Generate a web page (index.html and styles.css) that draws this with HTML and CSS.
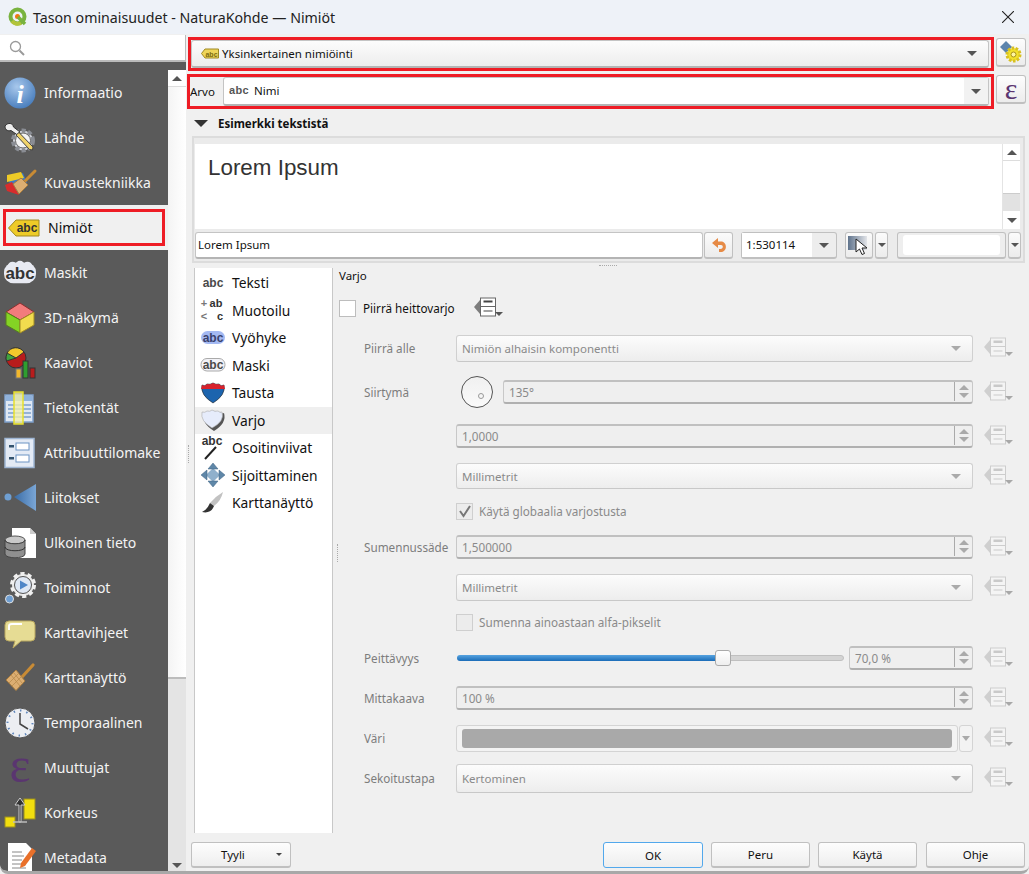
FILE: index.html
```html
<!DOCTYPE html>
<html lang="fi">
<head>
<meta charset="utf-8">
<title>Tason ominaisuudet</title>
<link rel="stylesheet" href="styles.css">
</head>
<body>
<svg class="defs" width="0" height="0">
  <defs>
    <symbol id="dd" viewBox="0 0 30 22">
      <path d="M0 10 6 3V17Z" fill="#cfcfcf"/>
      <rect x="6.5" y="1" width="15" height="8.500" fill="#f4f4f4" stroke="#cdcdcd"/>
      <rect x="6.500" y="9.500" width="15" height="9.500" fill="#f4f4f4" stroke="#cdcdcd"/>
      <rect x="9.500" y="3.500" width="9" height="2.500" fill="#c9c9c9"/>
      <rect x="9.500" y="13.500" width="9" height="1" fill="#c9c9c9"/>
      <path d="M21 15h8l-4 4Z" fill="#a8a8a8"/>
    </symbol>
    <symbol id="brush" viewBox="0 0 32 32">
      <path d="M18 15 29 3" stroke="#c88b35" stroke-width="3.200" stroke-linecap="round"/>
      <path d="M2 18 12 8 21 19 12 28.500Z" fill="#dcae72" stroke="#a87c3f"/>
      <path d="M7 13 16 24M9.500 10.500 18.500 21.500M5 21 15 11M8 24 18 14" stroke="#b88a4c" stroke-width=".8" fill="none"/>
    </symbol>
  </defs>
</svg>
<div class="window">
  <header class="titlebar">
    <svg class="qlogo" viewBox="0 0 20 20" width="20" height="20"><circle cx="9.500" cy="9.500" r="7" fill="none" stroke="#79b33f" stroke-width="4"/><path d="M4 14 A7 7 0 0 0 13 16" fill="none" stroke="#b3c43a" stroke-width="4"/><circle cx="9.500" cy="9.500" r="2.500" fill="#ee7913"/><path d="M10 10l7 7" stroke="#79b33f" stroke-width="3.500"/></svg>
    <span class="title">Tason ominaisuudet - NaturaKohde — Nimiöt</span>
    <svg class="close" viewBox="0 0 12 12" width="12" height="12"><path d="M0 0 12 12M12 0 0 12" stroke="#222" stroke-width="1.100"/></svg>
  </header>
  <div class="body">
    <aside class="leftcol">
      <div class="search"><svg viewBox="0 0 16 16" width="16" height="16"><circle cx="6.500" cy="6.500" r="5" fill="none" stroke="#9a9a9a" stroke-width="1.300"/><path d="M10.500 10.500 15 15" stroke="#9a9a9a" stroke-width="2"/></svg></div>
      <div class="navwrap">
        <nav class="nav">
          <div class="nav-item"><svg class="ni" viewBox="0 0 32 32"><defs><radialGradient id="ig" cx=".4" cy=".3" r=".8"><stop offset="0" stop-color="#a8c8ec"/><stop offset="1" stop-color="#3f76b8"/></radialGradient></defs><circle cx="16" cy="16" r="15.500" fill="url(#ig)"/><text x="16" y="26" class="itext">i</text></svg><span>Informaatio</span></div>
          <div class="nav-item"><svg class="ni" viewBox="0 0 32 32"><circle cx="19" cy="18.500" r="10" fill="#cfd2d8" stroke="#8a8d94" stroke-width="4" stroke-dasharray="4 2.500"/><circle cx="19" cy="18.500" r="7.500" fill="#f4f4f4" stroke="#666"/><path d="M1 4C4 0 9 1 9.500 5L16 10 13.500 13 7 8.500C4 9.500 1 8 1 4Z" fill="#eee" stroke="#333"/><path d="M12 13 15 10.500 29 25 28.500 28 25.500 27.500Z" fill="#f0d36a" stroke="#444"/></svg><span>Lähde</span></div>
          <div class="nav-item"><svg class="ni" viewBox="0 0 32 32"><path d="M3 12 19 6 23 16 14 27Z" fill="#3f78c4"/><path d="M1 18 8 15 15 28 3 24Z" fill="#d82c2c"/><path d="M3 8 17 5 20 11 3 15Z" fill="#eecb27"/><path d="M20 15 31 4" stroke="#c88b35" stroke-width="3" stroke-linecap="round"/><path d="M9 17 17 11 24 18 15 27Z" fill="#dcae72" stroke="#a87c3f"/></svg><span>Kuvaustekniikka</span></div>
          <div class="nav-item active"><div class="active-in"><svg class="tag" viewBox="0 0 32 18" width="32" height="18"><path d="M.5 9 8 1H31V17H8Z" fill="#eecb27" stroke="#a08a22"/><text x="19" y="13" class="abc">abc</text></svg><span>Nimiöt</span></div></div>
          <div class="nav-item"><svg class="ni" viewBox="0 0 34 26"><rect x="0" y="2" width="34" height="22" rx="10" fill="#e8eaf2"/><circle cx="9" cy="6" r="5" fill="#e8eaf2"/><circle cx="25" cy="6" r="5" fill="#e8eaf2"/><circle cx="17" cy="5" r="5" fill="#e8eaf2"/><text x="17" y="19" class="abc big">abc</text></svg><span>Maskit</span></div>
          <div class="nav-item"><svg class="ni" viewBox="0 0 32 32"><path d="M16 1 30 10 16 18 2 10Z" fill="#f27c7c" stroke="#8c2d2d"/><path d="M2 10 16 18V31L2 23Z" fill="#84d324" stroke="#567d1f"/><path d="M30 10 16 18V31L30 23Z" fill="#f2dc4e" stroke="#a18c24"/></svg><span>3D-näkymä</span></div>
          <div class="nav-item"><svg class="ni" viewBox="0 0 32 32"><circle cx="12" cy="11" r="10" fill="#b81c1c" stroke="#333"/><path d="M12 11V1A10 10 0 0 0 2.500 14Z" fill="#3fa33f" stroke="#333"/><path d="M12 11 3 6A10 10 0 0 1 20 5Z" fill="#f2c82c" stroke="#333"/><rect x="12" y="22" width="5" height="9" fill="#f2b72c" stroke="#777"/><rect x="19" y="14" width="5" height="17" fill="#2f9e2f" stroke="#333"/><rect x="26" y="21" width="5" height="10" fill="#b81c1c" stroke="#333"/></svg><span>Kaaviot</span></div>
          <div class="nav-item"><svg class="ni" viewBox="0 0 32 32"><rect x="1" y="3" width="28" height="27" fill="#dfe8f4" stroke="#7ea0cc" stroke-width="1.500"/><rect x="2" y="4" width="26" height="5" fill="#8fb2dc"/><path d="M4 13H27M4 17H27M4 21H27M4 25H27" stroke="#7ea0cc" stroke-width="1.500"/><rect x="10" y="0" width="9" height="32" fill="#f6f2a8" fill-opacity=".75" stroke="#e6df2c" stroke-width="1.500"/></svg><span>Tietokentät</span></div>
          <div class="nav-item"><svg class="ni" viewBox="0 0 32 32"><rect x="1" y="1.500" width="29" height="29" fill="#e3eaf5" stroke="#9fb6d4" stroke-width="1.500"/><rect x="12" y="6" width="13" height="7" fill="#fff" stroke="#6d93c4"/><rect x="12" y="18" width="13" height="7" fill="#fff" stroke="#6d93c4"/><rect x="5" y="8" width="5" height="2.500" fill="#33536f"/><rect x="5" y="20" width="5" height="2.500" fill="#33536f"/></svg><span>Attribuuttilomake</span></div>
          <div class="nav-item"><svg class="ni" viewBox="0 0 32 32"><defs><linearGradient id="lg" x1="0" x2="1"><stop offset="0" stop-color="#3a6ca6"/><stop offset="1" stop-color="#7aa6d6"/></linearGradient></defs><path d="M10 15 32 2V29Z" fill="url(#lg)"/><circle cx="4" cy="15" r="3.500" fill="#6f9fd2"/></svg><span>Liitokset</span></div>
          <div class="nav-item"><svg class="ni" viewBox="0 0 32 32"><path d="M8 1H26L32 7V31H8Z" fill="#fff"/><path d="M26 1V7H32Z" fill="#ccc"/><ellipse cx="11" cy="13" rx="10" ry="4" fill="#c9c9c9" stroke="#555"/><path d="M1 13V27C1 32 21 32 21 27V13C21 18 1 18 1 13Z" fill="#8f8f8f" stroke="#444"/><path d="M1 20C1 25 21 25 21 20" fill="none" stroke="#333"/></svg><span>Ulkoinen tieto</span></div>
          <div class="nav-item"><svg class="ni" viewBox="0 0 32 32"><circle cx="19" cy="13" r="11" fill="#e6e6e6" stroke="#f0f0f0" stroke-width="4" stroke-dasharray="4 3"/><circle cx="19" cy="13" r="8.500" fill="#dfe8f5" stroke="#555"/><path d="M16 8.500 24 13 16 17.500Z" fill="#4f86c8"/><circle cx="5.500" cy="27" r="4" fill="#6f9fd2" stroke="#e0e0e0"/></svg><span>Toiminnot</span></div>
          <div class="nav-item"><svg class="ni" viewBox="0 0 32 32"><path d="M5 4H27Q31 4 31 8V20Q31 24 27 24H17L9 31 11 24H5Q1 24 1 20V8Q1 4 5 4Z" fill="#e6dc94" stroke="#b8a760"/><path d="M5 13V9Q5 7 8 7H18" stroke="#fff" stroke-width="2" fill="none"/></svg><span>Karttavihjeet</span></div>
          <div class="nav-item"><svg class="ni"><use href="#brush" width="32" height="32"/></svg><span>Karttanäyttö</span></div>
          <div class="nav-item"><svg class="ni" viewBox="0 0 32 32"><circle cx="16" cy="16" r="15" fill="#eceef2" stroke="#555"/><circle cx="16" cy="16" r="12.500" fill="none" stroke="#5f86bb" stroke-width="2" stroke-dasharray="1.500 5"/><path d="M16 6V17L24 22" fill="none" stroke="#444" stroke-width="1.500"/></svg><span>Temporaalinen</span></div>
          <div class="nav-item"><span class="eps-icon">ε</span><span>Muuttujat</span></div>
          <div class="nav-item"><svg class="ni" viewBox="0 0 32 32"><rect x="20" y="2" width="11" height="20" fill="#f2de0e" stroke="#9c8f1e"/><rect x="1" y="20" width="10" height="10" fill="#f2de0e" stroke="#9c8f1e"/><path d="M15 25V8H11L16 1 21 8H17V25Z" fill="#333" stroke="#ccc"/><path d="M9 25H23" stroke="#bbb" stroke-width="1.500"/></svg><span>Korkeus</span></div>
          <div class="nav-item"><svg class="ni" viewBox="0 0 32 32"><path d="M4 1H22L28 7V31H4Z" fill="#fff"/><path d="M8 10H18M8 14H20M8 18H18M8 22H22M8 26H22" stroke="#888"/><path d="M17 21 28 6l4 3-11 15-5 2Z" fill="#e9702a"/></svg><span>Metadata</span></div>
        </nav>
        <div class="navscroll"><div class="arrow-btn"><i class="tri-up"></i></div><div class="nav-thumb"></div><div class="nav-rest"></div><div class="arrow-btn low"><i class="tri-down"></i></div></div>
      </div>
    </aside>
    <main class="main">
      <div class="row-one">
        <div class="redbox box-one">
          <div class="combo raised fill">
            <svg class="minitag" viewBox="0 0 18 11" width="18" height="11"><path d="M.5 5.500 4 1H17.500V10H4Z" fill="#eed55a" stroke="#a08a22"/><text x="10.500" y="8.500" class="abc small">abc</text></svg>
            <span class="grow">Yksinkertainen nimiöinti</span><i class="tri-down"></i>
          </div>
        </div>
        <button class="tool"><svg viewBox="0 0 24 24" width="24" height="24"><path d="M7 1 13 7 7 13 1 7Z" fill="#5c84ac"/><circle cx="14.500" cy="14.500" r="6.500" fill="#f2e02a" stroke="#d8c020" stroke-width="3" stroke-dasharray="2.500 1.500"/><circle cx="14.500" cy="14.500" r="2.500" fill="#fff6a0" stroke="#a8921c"/></svg></button>
      </div>
      <div class="row-two">
        <div class="redbox box-two">
          <label class="arvo">Arvo</label>
          <div class="combo white fill">
            <span class="abc-plain">abc</span>
            <span class="grow">Nimi</span><span class="cap"><i class="tri-down"></i></span>
          </div>
        </div>
        <button class="tool"><span class="eps-btn">ε</span></button>
      </div>
      <div class="preview-head"><i class="tri-big"></i><strong>Esimerkki tekstistä</strong></div>
      <section class="preview-frame">
        <div class="preview-top">
          <div class="preview-canvas">Lorem Ipsum</div>
          <div class="pv-scroll"><div class="pv-btn"><i class="tri-up"></i></div><div class="pv-gap"></div><div class="pv-thumb"></div><div class="pv-btn end"><i class="tri-down"></i></div></div>
        </div>
        <div class="preview-tools">
          <div class="text-input">Lorem Ipsum</div>
          <button class="mini undo"><svg viewBox="0 0 16 16" width="16" height="16"><path d="M7 1 1 6 7 11V8H10C12.500 8 12.500 12 9.500 12H8V15H10C16.500 15 16.500 4.500 10 4.500H7Z" fill="#e68a45"/></svg></button>
          <div class="scale"><span class="scale-val">1:530114</span><span class="scale-cap"><i class="tri-down"></i></span></div>
          <button class="mini pointer"><svg viewBox="0 0 24 20" width="24" height="20"><defs><linearGradient id="pg" x1="0" x2="1"><stop offset="0" stop-color="#5f738c"/><stop offset="1" stop-color="#e2e4e8"/></linearGradient></defs><rect x="1" y="1" width="19" height="14" fill="url(#pg)"/><path d="M9 4V17L12.500 14 15 19.500 17.500 18.500 15 13H20Z" fill="#fff" stroke="#222"/></svg></button>
          <button class="mini drop"><i class="tri-down"></i></button>
          <div class="colorbox"><div class="colorbox-in"></div></div>
          <button class="mini drop narrow"><i class="tri-down"></i></button>
        </div>
      </section>
      <div class="hsplit"><i></i></div>
      <div class="content">
        <ul class="tabs">
          <li><svg viewBox="0 0 24 16" width="24" height="16"><text x="12" y="12" class="abc grey">abc</text></svg><span>Teksti</span></li>
          <li><svg viewBox="0 0 26 26" width="26" height="26"><text x="4" y="10" class="op">+</text><text x="4" y="23" class="op">&lt;</text><text x="16" y="10" class="abc tiny">ab</text><text x="20" y="23" class="abc tiny">c</text></svg><span>Muotoilu</span></li>
          <li><svg viewBox="0 0 24 16" width="24" height="16"><rect x="0" y="1" width="24" height="13" rx="6.500" fill="#a4b9f2"/><text x="12" y="12" class="abc navy">abc</text></svg><span>Vyöhyke</span></li>
          <li><svg viewBox="0 0 26 16" width="26" height="16"><rect x="1" y="1.500" width="24" height="12.500" rx="6" fill="#f2f2f7" stroke="#aaa"/><text x="13" y="12" class="abc grey">abc</text></svg><span>Maski</span></li>
          <li><svg viewBox="0 0 24 22" width="24" height="22"><path d="M1 3Q4 5 6 2 9 3 12 1 15 3 18 2 20 5 23 3 25 13 12 21 -1 13 1 3Z" fill="#1c64ae" stroke="#222" stroke-width=".6"/><path d="M1 3Q4 5 6 2 9 3 12 1 15 3 18 2 20 5 23 3L24 7H0Z" fill="#d8222c"/></svg><span>Tausta</span></li>
          <li class="sel"><svg viewBox="0 0 24 22" width="24" height="22"><path d="M3 4Q6 5 8 3 11 4 13 2 16 4 19 3 21 5 23 4 26 14 13 22 0 14 3 4Z" fill="#555"/><path d="M1 3Q4 4 6 2 9 3 11 1 14 3 17 2 19 4 21 3 24 12 11 19 -1 12 1 3Z" fill="#e6ecfb" stroke="#aaa" stroke-width=".6"/></svg><span>Varjo</span></li>
          <li><svg viewBox="0 0 26 26" width="26" height="26"><text x="12" y="10" class="abc dark">abc</text><path d="M16 12 5 24" stroke="#222" stroke-width="2"/></svg><span>Osoitinviivat</span></li>
          <li><svg viewBox="0 0 26 26" width="26" height="26"><rect x="8" y="8" width="10" height="10" transform="rotate(45 13 13)" fill="#8fb0cc"/><path d="M13 1 18 7H8ZM13 25 8 19H18ZM1 13 7 8V18ZM25 13 19 18V8Z" fill="#5f87a8" stroke="#3e6383" stroke-width=".5"/></svg><span>Sijoittaminen</span></li>
          <li><svg viewBox="0 0 24 24" width="24" height="24"><path d="M22 1Q20 10 13 15L9 12Q15 5 22 1Z" fill="#c2c2c2"/><path d="M9 12 13 15Q10 23 1 21 6 19 9 12Z" fill="#333"/></svg><span>Karttanäyttö</span></li>
        </ul>
        <div class="vsplit"><i></i></div>
        <section class="panel">
          <div class="panel-title">Varjo</div>
          <div class="enable-row">
            <span class="check"></span><span class="enable-label">Piirrä heittovarjo</span>
            <svg class="dd-main" viewBox="0 0 30 22" width="30" height="22"><path d="M0 10 6 3V17Z" fill="#7d7d7d"/><rect x="6.500" y="1" width="15" height="8.500" fill="#fff" stroke="#666"/><rect x="6.500" y="9.500" width="15" height="9.500" fill="#fff" stroke="#666"/><rect x="9.500" y="3.500" width="9" height="2" fill="#444"/><rect x="9.500" y="13.500" width="9" height="1" fill="#444"/><path d="M21 15h8l-4 4Z" fill="#555"/></svg>
          </div>
          <div class="form">
            <label>Piirrä alle</label>
            <div class="combo raised dis h27"><span class="grow">Nimiön alhaisin komponentti</span><i class="tri-down"></i></div>
            <svg class="ddi"><use href="#dd"/></svg>

            <label>Siirtymä</label>
            <div class="dialrow"><span class="dial"><i></i></span><div class="spin"><span class="grow">135°</span><span class="arrows"><i class="tri-up"></i><i class="tri-down"></i></span></div></div>
            <svg class="ddi"><use href="#dd"/></svg>

            <span></span>
            <div class="spin"><span class="grow">1,0000</span><span class="arrows"><i class="tri-up"></i><i class="tri-down"></i></span></div>
            <svg class="ddi"><use href="#dd"/></svg>

            <span></span>
            <div class="combo raised dis h26"><span class="grow">Millimetrit</span><i class="tri-down"></i></div>
            <svg class="ddi"><use href="#dd"/></svg>

            <span></span>
            <div class="checkrow"><span class="check dis on"><svg viewBox="0 0 14 14" width="14" height="14"><path d="M2 7 5.500 12 12 2" fill="none" stroke="#777" stroke-width="2"/></svg></span><span>Käytä globaalia varjostusta</span></div>
            <span></span>

            <label>Sumennussäde</label>
            <div class="spin"><span class="grow">1,500000</span><span class="arrows"><i class="tri-up"></i><i class="tri-down"></i></span></div>
            <svg class="ddi"><use href="#dd"/></svg>

            <span></span>
            <div class="combo raised dis h27"><span class="grow">Millimetrit</span><i class="tri-down"></i></div>
            <svg class="ddi"><use href="#dd"/></svg>

            <span></span>
            <div class="checkrow"><span class="check dis"></span><span>Sumenna ainoastaan alfa-pikselit</span></div>
            <span></span>

            <label>Peittävyys</label>
            <div class="sliderrow"><div class="slider"><div class="slider-fill" style="width:67.8%"></div><div class="slider-handle"></div><div class="slider-rest"></div></div><div class="spin short"><span class="grow">70,0 %</span><span class="arrows"><i class="tri-up"></i><i class="tri-down"></i></span></div></div>
            <svg class="ddi"><use href="#dd"/></svg>

            <label>Mittakaava</label>
            <div class="spin"><span class="grow">100 %</span><span class="arrows"><i class="tri-up"></i><i class="tri-down"></i></span></div>
            <svg class="ddi"><use href="#dd"/></svg>

            <label>Väri</label>
            <div class="colorrow"><div class="colorbtn"><div class="swatch"></div></div><div class="colordrop"><i class="tri-down"></i></div></div>
            <svg class="ddi"><use href="#dd"/></svg>

            <label>Sekoitustapa</label>
            <div class="combo raised dis h29"><span class="grow">Kertominen</span><i class="tri-down"></i></div>
            <svg class="ddi"><use href="#dd"/></svg>
          </div>
        </section>
      </div>
      <footer class="footer">
        <button class="btn style">Tyyli<i class="tri-small"></i></button>
        <span class="grow"></span>
        <button class="btn ok">OK</button>
        <button class="btn">Peru</button>
        <button class="btn">Käytä</button>
        <button class="btn help">Ohje</button>
      </footer>
      <i class="leftgrip"></i>
    </main>
  </div>
</div>
</body>
</html>
```

FILE: styles.css
```css
* { box-sizing: border-box; }
html, body { margin: 0; padding: 0; }
body { width: 1029px; height: 874px; overflow: hidden; background: #f0f0f0; font: 12px "Noto Sans", "Open Sans", sans-serif; color: #111; }
.defs { position: absolute; }
.window { height: 874px; display: flex; flex-direction: column; border-bottom: 3px solid #a8a8a8; border-radius: 0 0 8px 8px; overflow: hidden; }
.titlebar { height: 34px; flex: none; background: #eef2f8; display: flex; align-items: center; padding: 0 15px 0 8px; }
.qlogo { margin-right: 5px; }
.title { flex: 1; font-size: 14.200px; color: #222; }
.body { flex: 1; display: flex; min-height: 0; }
.leftcol { width: 186px; flex: none; display: flex; flex-direction: column; }
.search { height: 27px; margin-top: 1px; background: #fff; border-bottom: 2px solid #bbb; border-right: 1px solid #bbb; padding: 5px 0 0 9px; }
.navwrap { flex: 1; display: flex; background: #5a5a5a; padding-top: 8px; min-height: 0; border-radius: 0 0 0 6px; }
.nav { width: 168px; flex: none; overflow: hidden; }
.nav-item { height: 45px; display: flex; align-items: center; padding-left: 4px; color: #f4f4f4; font-size: 14px; }
.nav-item .ni { width: 32px; height: 32px; margin-right: 8px; flex: none; overflow: visible; }
.nav-item.active { background: #f0f0f0; color: #111; padding: 2px 3px 2px 3px; }
.active-in { flex: 1; height: 37px; border: 3px solid #ee1c25; display: flex; align-items: center; padding-left: 2px; }
.tag { margin-right: 8px; flex: none; }
.eps-icon { width: 32px; height: 32px; margin-right: 8px; flex: none; text-align: center; font: 50px/26px "Liberation Serif", serif; color: #5a3570; }
.itext { font: italic bold 26px "Liberation Serif", serif; fill: #fff; text-anchor: middle; }
.abc { font: bold 12px "Liberation Sans", sans-serif; text-anchor: middle; fill: #333; }
.abc.big { font-size: 18px; }
.abc.small { font-size: 7px; fill: #7c6a10; }
.abc.tiny { font-size: 11px; }
.abc.grey { fill: #4a4a4a; }
.abc.dark { fill: #333; }
.abc.navy { fill: #39416c; }
.op { font: bold 11px "Liberation Sans", sans-serif; fill: #777; text-anchor: middle; }
.navscroll { width: 18px; flex: none; display: flex; flex-direction: column; background: #e4e4e4; }
.arrow-btn { height: 17px; background: #fff; border-bottom: 1px solid #ddd; display: flex; align-items: center; justify-content: center; flex: none; }
.arrow-btn.low { background: #e4e4e4; border: 0; height: 12px; }
.nav-thumb { height: 592px; background: linear-gradient(90deg, #f4f4f4, #fff); border-bottom: 2px solid #bcbcbc; flex: none; }
.nav-rest { flex: 1; }
.tri-up, .tri-down { display: block; width: 0; height: 0; border-left: 5px solid transparent; border-right: 5px solid transparent; }
.tri-up { border-bottom: 5px solid #555; }
.tri-down { border-top: 5px solid #555; }
.main { flex: 1; min-width: 0; display: flex; flex-direction: column; position: relative; }
.leftgrip { position: absolute; left: 2px; top: 411px; height: 18px; border-left: 1px dotted #aaa; }
.row-one { height: 34px; margin-top: 3px; flex: none; display: flex; align-items: flex-start; }
.row-two { height: 35px; margin-top: 3px; flex: none; display: flex; align-items: flex-start; }
.redbox { border: 3px solid #ee1c25; display: flex; align-items: stretch; }
.box-one { width: 806px; height: 34px; margin-left: 2px; padding-right: 2px; }
.box-two { width: 807px; height: 35px; margin-left: 1px; padding-right: 2px; }
.fill { flex: 1; min-width: 0; }
.combo { display: flex; align-items: center; border: 1px solid #c4c4c4; border-bottom: 2px solid #b4b4b4; border-radius: 3px; padding: 0 11px 0 7px; font-size: 11.500px; }
.raised { background: linear-gradient(#fcfcfc, #ededed); }
.white { background: #fff; padding-right: 0; }
.white .grow { padding-bottom: 2px; }
.grow { flex: 1; min-width: 0; white-space: nowrap; }
.minitag { margin: 0 3px 0 2px; flex: none; }
.cap { width: 24px; align-self: stretch; background: #f2f2f2; display: flex; align-items: center; justify-content: center; }
.arvo { width: 33px; flex: none; align-self: center; font-size: 11.500px; padding-bottom: 1px; }
.abc-plain { font: bold 11px "Liberation Sans", sans-serif; color: #555; width: 25px; letter-spacing: .3px; flex: none; margin: 0 0 2px -2px; }
.tool { width: 30px; height: 29px; flex: none; margin: 1px 0 0 2px; padding: 0; border: 1px solid #c0c0c0; border-bottom-width: 2px; border-radius: 3px; background: linear-gradient(#fdfdfd, #ececec); display: flex; align-items: center; justify-content: center; }
.eps-btn { font: 30px/24px "Liberation Serif", serif; color: #5a3570; }
.preview-head { height: 15px; margin: 7px 0 0 8px; flex: none; display: flex; align-items: center; }
.preview-head strong { font-size: 11.500px; }
.tri-big { width: 0; height: 0; border-left: 7px solid transparent; border-right: 7px solid transparent; border-top: 7px solid #333; margin-right: 10px; }
.preview-frame { height: 127px; margin: 5px 4px 0 6px; flex: none; border: 2px solid #dcdcdc; background: #ebebeb; padding: 6px 3px 3px 1px; display: flex; flex-direction: column; }
.preview-top { height: 85px; flex: none; display: flex; }
.preview-canvas { flex: 1; background: #fff; padding: 11px 13px; font: 22.400px/25px "Liberation Sans", sans-serif; color: #333; }
.pv-scroll { width: 18px; flex: none; background: #fff; display: flex; flex-direction: column; border-left: 1px solid #e4e4e4; }
.pv-btn { height: 17px; flex: none; display: flex; align-items: center; justify-content: center; border-bottom: 1px solid #ddd; }
.pv-btn.end { border: 0; height: 18px; }
.pv-gap { height: 32px; flex: none; }
.pv-thumb { flex: 1; background: #e2e2e2; border-top: 1px solid #ccc; }
.preview-tools { height: 27px; margin-top: 3px; flex: none; display: flex; align-items: stretch; }
.text-input { width: 508px; flex: none; background: #fff; border: 1px solid #c4c4c4; border-bottom: 2px solid #b4b4b4; border-radius: 3px; padding: 0 2px; line-height: 24px; font-size: 11.500px; }
.mini { padding: 0; border: 1px solid #c0c0c0; border-bottom-width: 2px; border-radius: 3px; background: linear-gradient(#fbfbfb, #ececec); display: flex; align-items: center; justify-content: center; flex: none; }
.undo { width: 29px; margin-left: 1px; }
.scale { width: 96px; margin-left: 8px; flex: none; display: flex; border: 1px solid #c0c0c0; border-bottom-width: 2px; border-radius: 3px; background: #ededed; }
.scale-val { width: 70px; background: #fff; padding-left: 4px; line-height: 24px; font-size: 11.500px; }
.scale-cap { flex: 1; display: flex; align-items: center; justify-content: center; }
.pointer { width: 28px; margin-left: 8px; }
.drop { width: 13px; margin-left: 2px; }
.drop .tri-down { border-left-width: 4px; border-right-width: 4px; border-top-width: 4px; }
.colorbox { width: 109px; margin-left: 9px; flex: none; border: 1px solid #c0c0c0; border-bottom-width: 2px; border-radius: 3px; background: #eee; padding: 2px 5px; }
.colorbox-in { height: 100%; background: #fff; border-radius: 3px; }
.hsplit { height: 5px; flex: none; display: flex; justify-content: center; align-items: center; }
.hsplit i { width: 18px; border-top: 1px dotted #aaa; }
.content { height: 565px; flex: none; display: flex; padding-left: 8px; }
.tabs { width: 139px; flex: none; margin: 0; padding: 1px 0 0; list-style: none; background: #fff; border-left: 1px solid #c8c8c8; border-right: 1px solid #c8c8c8; font-size: 13.800px; }
.tabs li { height: 27.500px; display: flex; align-items: center; padding-left: 5px; }
.tabs li svg { flex: none; width: 26px; margin-right: 5px; overflow: visible; }
.tabs li span { margin-left: 1px; }
.tabs li.sel { background: #efefef; }
.vsplit { width: 6px; flex: none; position: relative; }
.vsplit i { position: absolute; left: 4px; top: 276px; height: 18px; border-left: 1px dotted #aaa; }
.panel { flex: 1; min-width: 0; }
.panel-title { height: 16px; font-size: 11.500px; line-height: 16px; }
.enable-row { height: 18px; margin-top: 15px; display: flex; align-items: center; }
.enable-label { width: 111px; margin-left: 7px; font-size: 11.700px; }
.check { width: 17px; height: 17px; flex: none; background: #fff; border: 1px solid #bdbdbd; display: block; }
.check.dis { background: #ececec; border-color: #cfcfcf; display: flex; align-items: center; justify-content: center; }
.dd-main { flex: none; }
.form { margin-top: 9px; padding-left: 25px; display: grid; grid-template-columns: 92px 517px 30px; column-gap: 0; grid-template-rows: 44px 44px 44px 36px 34px 38px 42px 28px 44px 36px 44px 36px; align-items: center; color: #8a8a8a; font-size: 11.700px; }
.form label { color: #7d7d7d; white-space: nowrap; }
.ddi { width: 30px; height: 22px; margin-left: 11px; overflow: visible; }
.combo.dis { border-color: #d0d0d0; border-bottom-color: #c8c8c8; border-bottom-width: 1px; padding-left: 5px; color: #8a8a8a; }
.combo.dis .tri-down { border-top-color: #aaa; }
.h27 { height: 27px; }
.h26 { height: 26px; }
.h29 { height: 29px; }
.spin { flex: 1; height: 24px; display: flex; align-items: center; border: 1px solid #c8c8c8; border-top: 2px solid #c0c0c0; border-bottom: 2px solid #b0b0b0; border-radius: 3px; padding-left: 5px; background: #efefef; }
.arrows { width: 18px; align-self: stretch; flex: none; display: flex; flex-direction: column; justify-content: center; gap: 3px; align-items: center; border-left: 1px solid #aaa; margin: 0 0 1px; }
.arrows .tri-up { border-bottom-color: #aaa; }
.arrows .tri-down { border-top-color: #aaa; }
.dialrow, .sliderrow, .colorrow { display: flex; align-items: center; }
.dial { width: 32px; height: 32px; flex: none; margin: 0 10px 0 5px; border: 1px solid #555; border-radius: 50%; background: linear-gradient(#f0f0f0, #fafafa); display: flex; align-items: center; justify-content: center; }
.dial i { width: 6px; height: 6px; border: 1px solid #999; border-radius: 50%; margin: 8px 0 0 8px; }
.checkrow { display: flex; align-items: center; gap: 6px; }
.sliderrow { gap: 5px; }
.slider { flex: 1; height: 16px; display: flex; align-items: center; margin-left: 1px; }
.slider-fill { height: 6px; background: linear-gradient(#56a3e0, #1a6cb8); border-radius: 3px 0 0 3px; flex: none; }
.slider-handle { width: 16px; height: 16px; flex: none; margin: 0 -4px; background: linear-gradient(#fff, #eee); border: 1px solid #aaa; border-radius: 3px; position: relative; }
.slider-rest { flex: 1; height: 6px; background: #d4d4d4; border: 1px solid #c0c0c0; border-radius: 0 3px 3px 0; }
.spin.short { flex: none; width: 124px; }
.colorrow { gap: 1px; height: 27px; }
.colorbtn { flex: 1; height: 27px; border: 1px solid #d4d4d4; border-radius: 3px; padding: 3px 5px; background: #f3f3f3; }
.swatch { height: 100%; background: #a9a9a9; border-radius: 3px; }
.colordrop { width: 14px; height: 27px; flex: none; border: 1px solid #d4d4d4; border-radius: 3px; background: #f3f3f3; display: flex; align-items: center; justify-content: center; }
.colordrop .tri-down { border-left-width: 4px; border-right-width: 4px; border-top-color: #aaa; }
.footer { height: 26px; margin-top: 9px; flex: none; display: flex; padding: 0 4px 0 5px; gap: 8px; }
.btn { width: 99px; padding: 0; border: 1px solid #c0c0c0; border-bottom-width: 2px; border-radius: 3px; background: linear-gradient(#fdfdfd, #eee); font: 11.500px "Noto Sans", sans-serif; color: #111; }
.btn.help { margin-left: 1px; }
.btn.ok { width: 100px; border: 1px solid #52a8ec; }
.btn.style { width: 100px; display: flex; align-items: center; gap: 31px; padding-left: 29px; }
.tri-small { border-left: 3px solid transparent; border-right: 3px solid transparent; border-top: 3px solid #444; }
```
